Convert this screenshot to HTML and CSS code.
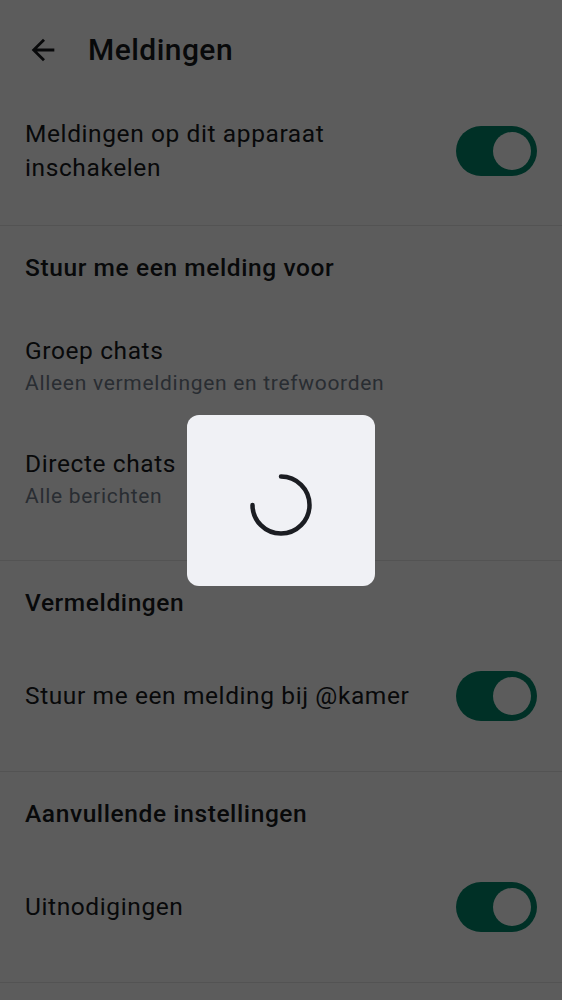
FILE: index.html
```html
<!DOCTYPE html>
<html lang="nl">
<head>
<meta charset="utf-8">
<title>Meldingen</title>
<link rel="stylesheet" href="styles.css">
</head>
<body>
<div class="screen">
  <header class="toolbar">
    <svg class="back" viewBox="0 0 24 24" aria-hidden="true"><path d="M20 11H7.83l5.59-5.59L12 4l-8 8 8 8 1.41-1.41L7.83 13H20v-2z"/></svg>
    <h1 class="title">Meldingen</h1>
  </header>

  <div class="row row-first">
    <div class="label">Meldingen op dit apparaat<br>inschakelen</div>
    <div class="switch"><span class="thumb"></span></div>
  </div>

  <section class="section">
    <h2 class="section-title">Stuur me een melding voor</h2>
    <div class="item">
      <div class="label">Groep chats</div>
      <div class="sub">Alleen vermeldingen en trefwoorden</div>
    </div>
    <div class="item">
      <div class="label">Directe chats</div>
      <div class="sub">Alle berichten</div>
    </div>
  </section>

  <section class="section">
    <h2 class="section-title">Vermeldingen</h2>
    <div class="item item-toggle">
      <div class="label">Stuur me een melding bij @kamer</div>
      <div class="switch"><span class="thumb"></span></div>
    </div>
  </section>

  <section class="section">
    <h2 class="section-title">Aanvullende instellingen</h2>
    <div class="item item-toggle">
      <div class="label">Uitnodigingen</div>
      <div class="switch"><span class="thumb"></span></div>
    </div>
  </section>
</div>

<div class="scrim">
  <div class="dialog">
    <svg class="spinner" viewBox="0 0 64 64" aria-hidden="true">
      <path d="M32 3.5 A28.5 28.5 0 1 1 3.5 32" fill="none" stroke="#1b1d22" stroke-width="4.5" stroke-linecap="round"/>
    </svg>
  </div>
</div>
</body>
</html>
```

FILE: styles.css
```css
* { box-sizing: border-box; }

html, body {
  margin: 0;
  padding: 0;
  background: #ffffff;
}

body {
  font-family: Roboto, "Noto Sans", "Liberation Sans", sans-serif;
  color: #17191c;
  width: 562px;
  height: 1000px;
  overflow: hidden;
}

.toolbar {
  height: 100px;
  display: flex;
  align-items: center;
  padding-left: 26px;
}

.back {
  width: 34px;
  height: 34px;
  fill: #17191c;
  flex: none;
}

.title {
  margin: 0 0 0 28px;
  font-size: 30px;
  font-weight: 500;
  line-height: 40px;
  letter-spacing: 0.45px;
}

.row {
  display: flex;
  align-items: center;
  justify-content: space-between;
  padding: 17px 25px 40px;
  border-bottom: 1px solid #e6e6e6;
}

.label {
  font-size: 24.5px;
  line-height: 34px;
  letter-spacing: 0.6px;
}

.sub {
  font-size: 21px;
  line-height: 31px;
  color: #737d8c;
  letter-spacing: 0.7px;
}

.section {
  padding: 0 25px 24px;
  border-bottom: 1px solid #e6e6e6;
}

.section-title {
  margin: 0;
  padding: 25px 0;
  font-size: 24.5px;
  line-height: 34px;
  font-weight: 500;
  letter-spacing: 0.6px;
}

.item {
  padding: 24px 0;
}

.item-toggle {
  display: flex;
  align-items: center;
  justify-content: space-between;
  min-height: 102px;
}

.switch {
  flex: none;
  width: 81px;
  height: 50px;
  border-radius: 25px;
  background: #00866a;
  display: flex;
  align-items: center;
  justify-content: flex-end;
  padding-right: 6px;
}

.thumb {
  width: 38px;
  height: 38px;
  border-radius: 50%;
  background: #ffffff;
}

.scrim {
  position: fixed;
  inset: 0;
  background: rgba(0, 0, 0, 0.64);
  display: flex;
  align-items: center;
  justify-content: center;
}

.dialog {
  width: 188px;
  height: 171px;
  border-radius: 12px;
  background: #f0f1f5;
  display: flex;
  align-items: center;
  justify-content: center;
  padding-top: 9px;
}

.spinner {
  width: 64px;
  height: 64px;
}
```
